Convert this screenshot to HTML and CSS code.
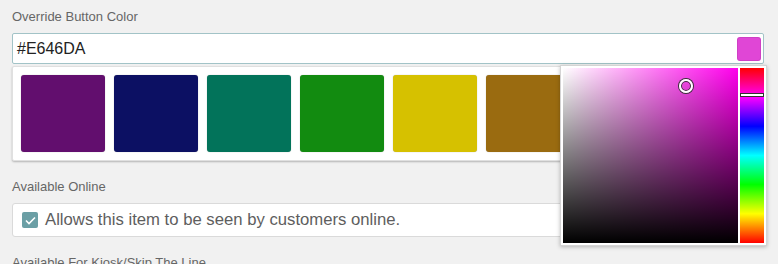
FILE: index.html
```html
<!DOCTYPE html>
<html lang="en">
<head>
  <meta charset="UTF-8" />
  <meta name="viewport" content="width=device-width, initial-scale=1.0" />
  <title>Item Settings</title>
  <link rel="stylesheet" href="styles.css">
</head>
<body>
  <div class="form">
    <div class="field color-field">
      <label class="field-label">Override Button Color</label>
      <div class="color-input">
        <span class="color-value">#E646DA</span>
        <span class="color-preview"></span>
      </div>
      <div class="swatch-panel">
        <div class="swatch" style="background:#620e6e"></div>
        <div class="swatch" style="background:#0c1063"></div>
        <div class="swatch" style="background:#02735a"></div>
        <div class="swatch" style="background:#128b10"></div>
        <div class="swatch" style="background:#d6c100"></div>
        <div class="swatch" style="background:#9a6b10"></div>
        <div class="swatch" style="background:#8a1c1c"></div>
        <div class="swatch" style="background:#444444"></div>
      </div>

      <div class="picker">
        <div class="sat-area">
          <span class="sat-marker" style="left:70%;top:10%"></span>
        </div>
        <div class="hue-bar">
          <span class="hue-marker" style="top:15.4%"></span>
        </div>
      </div>
    </div>

    <div class="field">
      <label class="field-label">Available Online</label>
      <div class="check-row">
        <span class="checkbox">
          <svg width="11" height="9" viewBox="0 0 11 9"><path d="M1 4.5 L4 7.5 L10 1.5" fill="none" stroke="#fff" stroke-width="1.6"/></svg>
        </span>
        <span class="check-text">Allows this item to be seen by customers online.</span>
      </div>
    </div>

    <div class="field">
      <label class="field-label">Available For Kiosk/Skip The Line</label>
    </div>
  </div>
</body>
</html>
```

FILE: styles.css
```css
body {
  margin: 0;
  padding: 8px 14px 0 12px;
  font-family: "Liberation Sans", Arial, sans-serif;
  background-color: #f1f1f1;
  overflow: hidden;
}

.form {
  display: flex;
  flex-direction: column;
}

.field {
  margin-bottom: 17px;
}

.color-field {
  position: relative;
}

.field-label {
  display: block;
  font-size: 13px;
  line-height: 17px;
  color: #666;
  margin-bottom: 8px;
}

.color-input {
  height: 31px;
  box-sizing: border-box;
  background: #fff;
  border: 1px solid #a2c3c7;
  border-radius: 2px;
  display: flex;
  align-items: center;
  justify-content: space-between;
  padding: 0 2px 0 4px;
}

.color-value {
  font-size: 16px;
  color: #222;
}

.color-preview {
  width: 24px;
  height: 24px;
  border-radius: 3px;
  background: #e046d6;
  box-shadow: inset 0 0 0 1px rgba(0,0,0,0.08);
}

.swatch-panel {
  margin-top: 2px;
  background: #fff;
  border: 1px solid #e0e0e0;
  border-radius: 2px;
  box-shadow: 0 1px 2px rgba(0,0,0,0.25);
  padding: 8px;
  display: flex;
  gap: 9.5px;
  overflow: hidden;
}

.swatch {
  flex: 0 0 83.5px;
  height: 77px;
  border-radius: 3px;
  box-shadow: 0 0 1px rgba(0,0,0,0.35);
}

.picker {
  position: absolute;
  left: 548px;
  top: 57px;
  width: 201px;
  height: 175px;
  padding: 2px;
  background: #fff;
  border: 1px solid #d4d4d4;
  box-shadow: 0 1px 4px rgba(0,0,0,0.25);
  display: flex;
  gap: 2px;
}

.sat-area {
  position: relative;
  flex: 1;
  background:
    linear-gradient(to top, #000, rgba(0,0,0,0)),
    linear-gradient(to right, #fff, rgba(255,255,255,0)),
    #ff00ec;
}

.sat-marker {
  position: absolute;
  width: 10px;
  height: 10px;
  margin: -7px 0 0 -7px;
  border: 2px solid #fff;
  border-radius: 50%;
  box-shadow: 0 0 0 1px #333, inset 0 0 0 1px #333;
}

.hue-bar {
  position: relative;
  width: 24px;
  background: linear-gradient(to bottom, #f00 0%, #f0f 16.6%, #00f 33.3%, #0ff 50%, #0f0 66.6%, #ff0 83.3%, #f00 100%);
}

.hue-marker {
  position: absolute;
  left: 0;
  right: 0;
  height: 2px;
  margin-top: -2px;
  background: #fff;
  border: 1px solid #333;
}

.check-row {
  height: 34px;
  box-sizing: border-box;
  background: #fff;
  border: 1px solid #dadada;
  border-radius: 3px;
  display: flex;
  align-items: center;
  padding-left: 9px;
  gap: 7px;
}

.checkbox {
  width: 16px;
  height: 16px;
  border-radius: 2px;
  background: #6b9fa5;
  display: flex;
  align-items: center;
  justify-content: center;
}

.check-text {
  font-size: 16.7px;
  color: #5e5e5e;
}
```
